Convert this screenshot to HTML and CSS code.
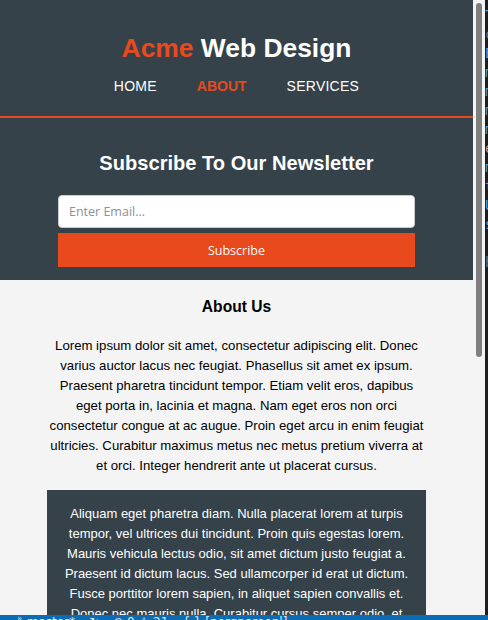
FILE: index.html
```html
<!DOCTYPE html>
<html lang="en">
<head>
<meta charset="utf-8">
<title>Acme Web Design | About</title>
<link rel="stylesheet" href="styles.css">
</head>
<body>
<div class="window">
  <div class="workspace">
    <div class="page">
      <header class="site-header">
        <h1 class="brand"><span class="highlight">Acme</span> Web Design</h1>
        <nav>
          <ul class="nav">
            <li><a href="#">Home</a></li>
            <li class="current"><a href="#">About</a></li>
            <li><a href="#">Services</a></li>
          </ul>
        </nav>
      </header>
      <section class="newsletter">
        <div class="container">
          <h2 class="newsletter-title">Subscribe To Our Newsletter</h2>
          <form class="subscribe-form">
            <input class="email-input" type="email" placeholder="Enter Email...">
            <button class="subscribe-button" type="button">Subscribe</button>
          </form>
        </div>
      </section>
      <main class="main container">
        <h2 class="page-title">About Us</h2>
        <p class="intro">Lorem ipsum dolor sit amet, consectetur adipiscing elit. Donec varius auctor lacus nec feugiat. Phasellus sit amet ex ipsum. Praesent pharetra tincidunt tempor. Etiam velit eros, dapibus eget porta in, lacinia et magna. Nam eget eros non orci consectetur congue at ac augue. Proin eget arcu in enim feugiat ultricies. Curabitur maximus metus nec metus pretium viverra at et orci. Integer hendrerit ante ut placerat cursus.</p>
        <aside class="dark">
          <p>Aliquam eget pharetra diam. Nulla placerat lorem at turpis tempor, vel ultrices dui tincidunt. Proin quis egestas lorem. Mauris vehicula lectus odio, sit amet dictum justo feugiat a. Praesent id dictum lacus. Sed ullamcorper id erat ut dictum. Fusce porttitor lorem sapien, in aliquet sapien convallis et. Donec nec mauris nulla. Curabitur cursus semper odio, et feugiat mauris tincidunt non.</p>
        </aside>
      </main>
    </div>
    <div class="scrollbar"><div class="thumb"></div></div>
    <div class="editor">
      <div class="code-line kw">T</div>
      <div class="code-line dim">c</div>
      <div class="code-line kw">E</div>
      <div class="code-line kw">m</div>
      <div class="code-line kw">m</div>
      <div class="code-line kw">m</div>
      <div class="code-line kw">m</div>
      <div class="code-line str">e</div>
      <div class="code-line kw">m</div>
      <div class="code-line kw">t</div>
      <div class="code-line kw">U</div>
      <div class="code-line kw">s</div>
      <div class="code-line dim">:</div>
      <div class="code-line dim">h</div>
    </div>
  </div>
  <div class="statusbar">
    <span class="status-item branch">&#5792; master*</span>
    <span class="status-item">&#8635;</span>
    <span class="status-item">&#8855; 0 &#9888; 21</span>
    <span class="status-item">{.} [pergpareepl]</span>
  </div>
</div>
</body>
</html>
```

FILE: styles.css
```css
html,
body {
  margin: 0;
  padding: 0;
  height: 620px;
  overflow: hidden;
}

body {
  font-family: "Liberation Sans", Arial, Helvetica, sans-serif;
  background: #1e1e1e;
  color: #000;
}

.window {
  display: flex;
  flex-direction: column;
  height: 620px;
}

.workspace {
  flex: 1;
  min-height: 0;
  display: flex;
  overflow: hidden;
}

.page {
  width: 473px;
  flex: none;
  background: #f4f4f4;
  overflow: hidden;
}

.container {
  width: 80%;
  margin: 0 auto;
}

/* Header */
.site-header {
  background: #35424a;
  color: #fff;
  padding: 33px 0 20px;
  border-bottom: 2px solid #e8491d;
}

.brand {
  margin: 0 0 13px;
  font-size: 26.4px;
  line-height: 30px;
  font-weight: bold;
  text-align: center;
}

.highlight {
  color: #e8491d;
}

.nav {
  list-style: none;
  margin: 0;
  padding: 0;
  display: flex;
  justify-content: center;
  font-size: 14px;
  line-height: 20px;
  text-transform: uppercase;
}

.nav li {
  padding: 0 20px;
}

.nav a {
  color: #fff;
  text-decoration: none;
  letter-spacing: 0.25px;
}

.nav .current a {
  color: #e8491d;
  font-weight: bold;
  letter-spacing: 0;
}

/* Newsletter */
.newsletter {
  background: #35424a;
  color: #fff;
  padding: 33px 0 13px;
}

.newsletter-title {
  margin: 0 0 20px;
  font-size: 20.1px;
  line-height: 24px;
  font-weight: bold;
  text-align: center;
}

.subscribe-form {
  width: 357px;
  margin: 0 auto;
  display: flex;
  flex-direction: column;
  gap: 5px;
}

.email-input {
  box-sizing: border-box;
  width: 100%;
  height: 33px;
  margin: 0;
  padding: 0 10px;
  border: 1px solid #c9ccd0;
  border-radius: 4px;
  background: #fff;
  font-family: "Open Sans", "Noto Sans", sans-serif;
  font-size: 12.5px;
  color: #333;
}

.email-input::placeholder {
  color: #8d9197;
}

.subscribe-button {
  box-sizing: border-box;
  width: 100%;
  height: 34px;
  margin: 0;
  border: 0;
  border-radius: 0;
  background: #e8491d;
  color: #fff;
  font-family: "Open Sans", "Noto Sans", sans-serif;
  font-size: 12.5px;
}

/* Main */
.main {
  padding-top: 15px;
}

.page-title {
  margin: 0;
  font-size: 15.6px;
  line-height: 24px;
  font-weight: bold;
  text-align: center;
}

.intro {
  margin: 17px 0 14px;
  font-size: 13.2px;
  line-height: 20px;
  text-align: center;
}

.dark {
  background: #35424a;
  color: #fff;
  padding: 14px 15px;
}

.dark p {
  margin: 0;
  font-size: 13px;
  line-height: 20px;
  text-align: center;
}

/* Scrollbar */
.scrollbar {
  width: 12px;
  flex: none;
  box-sizing: border-box;
  background: #f4f4f4;
  padding: 3px 3px 0;
}

.thumb {
  width: 6px;
  height: 354px;
  border-radius: 3px;
  background: #7f7f7f;
}

/* Editor sliver */
.editor {
  width: 3px;
  flex: none;
  background: #1e1e1e;
  overflow: hidden;
  padding-top: 6px;
  font-family: "DejaVu Sans Mono", monospace;
  font-size: 14px;
  line-height: 19px;
}

.code-line {
  white-space: nowrap;
}

.kw {
  color: #569cd6;
}

.str {
  color: #ce9178;
}

.dim {
  color: #6a7580;
}

/* Status bar */
.statusbar {
  height: 5px;
  flex: none;
  background: #0b6cb3;
  overflow: hidden;
  display: flex;
  gap: 14px;
  padding-left: 16px;
  font-family: "DejaVu Sans", sans-serif;
  font-size: 12px;
  line-height: 12px;
  color: #dfe9f2;
  white-space: nowrap;
}

.status-item {
  padding-top: 1px;
}
```
